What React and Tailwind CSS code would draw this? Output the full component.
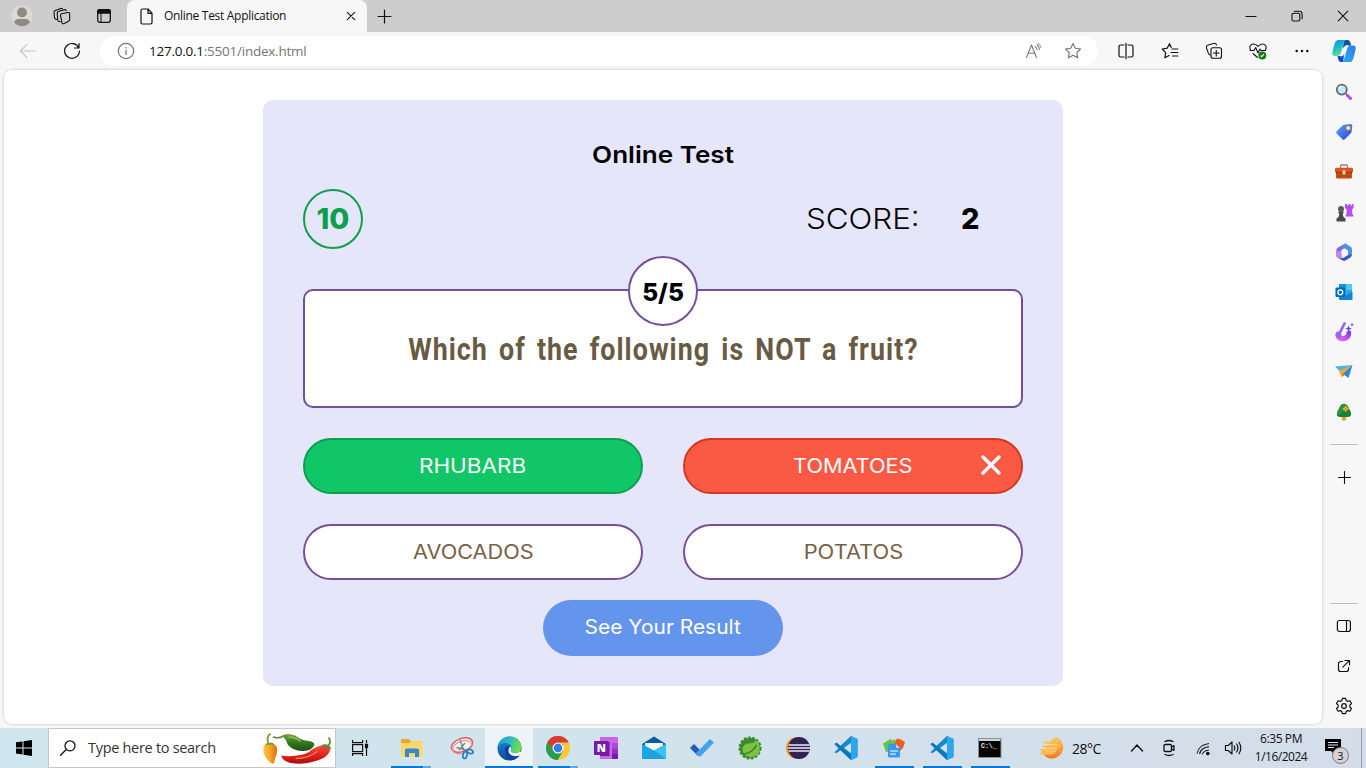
import React from "react";

const Svg = ({ w, h = w, children, vb, ...p }) => (
  <svg width={w} height={h} viewBox={vb || `0 0 ${w} ${h}`} fill="none" stroke="none" className="block shrink-0" {...p}>
    {children}
  </svg>
);

const Line = ({ w = 16, h = w, d, sw = 1.1, c = "#111", children }) => (
  <Svg w={w} h={h} stroke={c} strokeWidth={sw} strokeLinecap="round" strokeLinejoin="round">
    {d && <path d={d} />}
    {children}
  </Svg>
);

const Cell = ({ className = "", children }) => (
  <div className={`flex shrink-0 items-center justify-center ${className}`}>{children}</div>
);

/* ---------- tab strip ---------- */

function TabStrip() {
  return (
    <div className="flex h-8 shrink-0 items-stretch bg-[#cdcdcd] font-['Open_Sans','Noto_Sans',sans-serif]">
      <Cell className="w-11">
        <Svg w={22}>
          <circle cx="11" cy="11" r="10.5" fill="#dcdad7" />
          <circle cx="11" cy="7.5" r="5" fill="#8e8a86" />
          <path d="M3.200 17.500Q3.500 14 7.500 14h7q4 0 4.300 3.500Q15.500 21.300 11 21.300T3.200 17.500z" fill="#8e8a86" />
        </Svg>
      </Cell>
      <Cell className="w-9">
        <Line w={18}>
          <path d="M8.500 6.800l6.500-1.300q1.700-.2 1.700 1.400v5.600q0 1.200-1 1.700l-4.600 2.400q-1.800.7-2.200-1L7.500 8.300q-.1-1.300 1-1.500z" />
          <path d="M7 14.600l-1.400-.4q-.8-.3-.9-1.200L4.200 6.300q0-1.300 1.100-1.700l6-1.900q1.500-.3 1.800 1" />
          <path d="M3.500 12.400l-1-.5q-.9-.4-1-1.300L1 5.200q0-1.400 1.200-1.800l5.500-1.900q1.400-.4 1.800.6" />
        </Line>
      </Cell>
      <Cell className="w-[47px]">
        <Line w={14} sw={1.300}>
          <rect x=".7" y=".7" width="12.600" height="12.600" rx="2" />
          <path d="M.7 4V2.500Q.7.700 2.500.7h9q1.800 0 1.800 1.800V4z" fill="#111" />
          <path d="M4 4.500v8.500" strokeWidth="1" />
        </Line>
      </Cell>
      <div className="flex w-60 items-center rounded-t-lg bg-[#f7f7f7] pl-[13px]">
        <Svg w={13} h={17} stroke="#111" strokeWidth="1.200" strokeLinejoin="round">
          <path d="M1 2.500Q1 1 2.500 1H8l4 4.200v9.300q0 1.500-1.500 1.500h-8Q1 16 1 14.500zM8 1v4.300h4" />
        </Svg>
        <span className="ml-[11px] w-[178px] whitespace-nowrap text-[12px] tracking-[-0.3px] text-[#111]">Online Test Application</span>
        <Line w={18} sw={1.100} d="M5.300 5.300l7.400 7.400M12.700 5.300l-7.400 7.400" />
      </div>
      <Cell className="w-[35px]">
        <Line w={15} d="M7.500 1v13M1 7.500h13" sw={1.200} />
      </Cell>
      <div className="flex-1" />
      <Cell className="w-[46px]"><Line w={12} d="M1 6.500h10" /></Cell>
      <Cell className="w-[46px]">
        <Line w={12}>
          <rect x="1" y="3.200" width="7.800" height="7.800" rx="1.500" />
          <path d="M3.300 1.200h4.900q2.900 0 2.900 2.900v4.700" />
        </Line>
      </Cell>
      <Cell className="w-[46px]"><Line w={12} d="M1.200 1.200l9.600 9.600M10.800 1.200l-9.600 9.600" /></Cell>
    </div>
  );
}

/* ---------- address bar ---------- */

const STAR = "M9 1.500l2.300 4.700 5.200.8-3.700 3.600.9 5.200L9 13.300l-4.700 2.500.9-5.200L1.500 7l5.200-.8z";

function Toolbar() {
  return (
    <div className="flex h-[38px] shrink-0 items-center bg-[#f7f7f7] font-['Open_Sans','Noto_Sans',sans-serif]">
      <Cell className="w-[50px] pl-[6px]">
        <Line w={18} c="#c6c6c6" d="M16.500 9H1.500M8 2.300L1.300 9 8 15.700" sw={1.200} />
      </Cell>
      <Cell className="w-[44px]">
        <Line w={18} d="M15.800 6A7.400 7.400 0 1 0 16.400 9M16 1.500V6h-4.500" sw={1.200} />
      </Cell>
      <div className="ml-[6px] flex h-[30px] w-[998px] items-center rounded-full bg-white pl-[17px]">
        <Svg w={18} stroke="#727272" strokeWidth="1.200">
          <circle cx="9" cy="9" r="7.700" />
          <path d="M9 8v5M9 5v1.500" />
        </Svg>
        <span className="ml-[14px] w-[876px] whitespace-nowrap text-[13.500px] tracking-[-0.24px] text-[#777]">
          <span className="text-[#111]">127.0.0.1</span>:5501/index.html
        </span>
        <Line w={18} h={18} c="#777">
          <path d="M1.500 15.500L6.500 3l5 12.500M3.200 11.300h6.600M10.200 4.500q1.600 1 1.800 3M12 2.500q2.400 1.800 2.400 4.800" />
          <path d="M13.400 1.200q2.400 2 2.700 4.500" strokeWidth=".8" />
        </Line>
        <div className="w-[21px]" />
        <Line w={18} c="#727272" d={STAR} />
      </div>
      <div className="ml-[6px] flex">
        <Cell className="w-11">
          <Line w={18} d="M7 3H3.800Q2 3 2 4.800v8.400Q2 15 3.800 15H7M11 3h3.200Q16 3 16 4.800v8.400q0 1.800-1.800 1.800H11M9 1.300v15.400" sw={1.200} />
        </Cell>
        <Cell className="w-11">
          <Line w={18} d="M10.300 5.500L8.500 1.700 6.200 6.200l-5 .8 3.500 3.600-.8 5.100 4.200-2.200M11 7h5.800M10 10.500h6.800M11.500 14h5.300" sw={1.200} />
        </Cell>
        <Cell className="w-11">
          <Line w={18}>
            <rect x="6" y="5.800" width="10.500" height="10.500" rx="2" />
            <path d="M11.250 8.200v5.700M8.400 11h5.700M5.300 12.900q-1.500-.2-2-1.700L1.400 5.700q-.4-1.800 1.200-2.400l6.600-2q1.700-.3 2.300 1.600" />
          </Line>
        </Cell>
        <Cell className="w-11">
          <Line w={18}>
            <path d="M1.500 8C-.2 4.500 1.800 2 4.500 2 6.800 2 8 3.200 9 4.400 10 3.200 11.200 2 13.500 2c2.700 0 4.700 2.500 3 6M4 11.500l4.500 4M1 8.500h4l1.700-3L9 11l2-4 1 1.500h4.500" />
            <circle cx="13.300" cy="13.500" r="3.900" fill="#127a12" stroke="none" />
            <path d="M12 14l.7.700 2-2.400" stroke="#fff" />
          </Line>
        </Cell>
        <Cell className="w-11">
          <Svg w={16}>
            <circle cx="2.700" cy="8" r="1.250" fill="#111" />
            <circle cx="8" cy="8" r="1.250" fill="#111" />
            <circle cx="13.300" cy="8" r="1.250" fill="#111" />
          </Svg>
        </Cell>
      </div>
      <Cell className="w-10">
        <Svg w={24}>
          <defs>
            <linearGradient id="cpA" x1="0" y1="0" x2="0.300" y2="1">
              <stop offset="0" stopColor="#0a9bdc" /><stop offset=".5" stopColor="#19b7cf" /><stop offset="1" stopColor="#5fe08c" />
            </linearGradient>
            <linearGradient id="cpB" x1="1" y1="0" x2="0" y2="1">
              <stop offset="0" stopColor="#2b7be0" /><stop offset=".5" stopColor="#2f96f0" /><stop offset="1" stopColor="#15b4fa" />
            </linearGradient>
          </defs>
          <path d="M12 1h3.500q2 0 2.700 2l1 3.500h-4.500q-1.500 0-2 1.500L11 9z" fill="#0b5596" />
          <path d="M5.500 17H9q1.500 0 2-1.500l1.500-2L11 23H9q-2 0-2.500-2z" fill="#1840d8" />
          <path d="M6 1h8q-1.500.5-2.200 3L9.300 13q-1 4-4 4H3q-3.200 0-2.600-3.500Q1.400 8 3 3.500 4 1 6 1z" fill="url(#cpA)" />
          <path d="M18 23h-8q1.500-.5 2.200-3l2.500-9q1-4.500 4-4.500H21q3.200 0 2.600 3.500-1 5.500-2.600 10.500-1 2.500-3 2.500z" fill="url(#cpB)" />
          <path d="M15.800 6.500h-1.300q-1.500 0-2 1.500l-1.800 6.500q-.6 2.300-2.300 2.500h1.100q1.700 0 2.200-1.500l1.900-6.500q.6-2.200 2.200-2.500z" fill="#f7f7f7" stroke="#f7f7f7" strokeWidth=".6" />
        </Svg>
      </Cell>
    </div>
  );
}

/* ---------- side bar ---------- */

const sideIcons = [
  <Svg w={18} key="search">
    <path d="M11 11l2 2" stroke="#5d6468" strokeWidth="2" />
    <path d="M12.500 12.500l3 3" stroke="#b646f2" strokeWidth="3" strokeLinecap="round" />
    <circle cx="6.800" cy="6.600" r="5" fill="#c5e8fb" stroke="#63676b" strokeWidth="1.800" />
    <path d="M4 5.500q.8-2 2.800-2.200" stroke="#fff" strokeWidth="1.200" />
  </Svg>,
  <Svg w={18} key="tag">
    <defs><linearGradient id="tg" x1="0" y1="0" x2="1" y2="1"><stop stopColor="#5ba2fa" /><stop offset="1" stopColor="#2e45d3" /></linearGradient></defs>
    <path d="M9 1.800L15.300 1q2-.2 2 1.800l-.8 6.200q-.1.800-.7 1.300l-6 6q-1.200 1.200-2.400 0L1.600 10.500q-1-1.200.2-2.400L7.700 2.400q.5-.5 1.300-.6z" fill="url(#tg)" />
    <circle cx="13.300" cy="5" r="1.700" fill="#fff" stroke="#f7c63c" strokeWidth="1.300" />
  </Svg>,
  <Svg w={18} key="toolbox">
    <path d="M5.500 5V3.300q0-1.300 1.300-1.300h4.400q1.300 0 1.300 1.300V5" stroke="#888" strokeWidth="1.300" />
    <rect y="4.700" width="18" height="5" rx="1.200" fill="#de571a" />
    <path d="M1 9h16v5q0 1.500-1.500 1.500h-13Q1 15.500 1 14z" fill="#c64614" />
    <path d="M1 9.300h16" stroke="#8a2a0b" strokeWidth=".7" />
    <path d="M7.500 7.500h3v3L9 12l-1.500-1.500z" fill="#d8d8da" />
  </Svg>,
  <Svg w={19} key="games">
    <path d="M10 1h2v1.500h1.500V1h2v1.500H17V1h1.500v4L17 6.500l.3 4 1.400 3H10.500l1-3 .2-4L10 5z" fill="#b54cf5" />
    <circle cx="6" cy="6" r="3" fill="#5d5d5d" />
    <path d="M3.500 8.500h5v1.500L7.700 11l.8 3 2 1.500V18.500H1.500V15.500l2-1.500.8-3-.8-1z" fill="#4a4a4a" />
  </Svg>,
  <Svg w={18} key="m365">
    <path d="M9.800.7L3 4.500Q1.300 5.500 1.300 7.500v4.800q0 1.700 1.500 2.500l2 .9 1.700-3.500V7.300L12 4V1.500Q11 0 9.800.7z" fill="#776ce4" />
    <path d="M9 .9q1-.5 2 0L15.300 3.400Q17 4.500 17 6.500V10q0 1.500-1.500 2L13 13V8.800q0-1-.8-1.500L8 4.800z" fill="#4b91e9" />
    <path d="M3.500 15l4.200 2.400q1.400.8 2.800 0l5-2.900q1.500-1 1.500-3.500l-4.200 1.300-4.800 2.600z" fill="#3658b8" />
    <path d="M1.300 8.500v3.700q0 2 1.600 2.600 2 .8 4.700-.7l-1.300-1.500V8z" fill="#c785ec" />
    <path d="M6.500 6.900L9.300 5.300l3.200 1.900v3.500L9.500 12.500l-3-1.800z" fill="#f7f7f7" />
  </Svg>,
  <Svg w={18} key="outlook">
    <rect x="4" y="1" width="13" height="12" rx="1" fill="#28a8ea" />
    <path d="M4 1h7v6H4z" fill="#1593de" /><path d="M11 1h5q1 0 1 1v5h-6z" fill="#52c8f5" />
    <path d="M4 9l7 3.500L17.500 9v7q0 1-1 1H5q-1 0-1-1z" fill="#1384d1" />
    <rect x=".5" y="4.500" width="9.600" height="9.600" rx="1" fill="#0868b8" />
    <circle cx="5.300" cy="9.300" r="2.400" stroke="#fff" strokeWidth="1.400" />
  </Svg>,
  <Svg w={20} key="designer">
    <defs><linearGradient id="ds" x1="1" y1="0" x2="0.200" y2="1"><stop stopColor="#5b3ed2" /><stop offset=".5" stopColor="#b94af5" /><stop offset="1" stopColor="#ed73dd" /></linearGradient></defs>
    <path d="M4 9Q.5 11.500 2 15.500q2 4 7 3.800 6.500-.3 8-6.300.5-2.500-.5-4.500l-4 1q.5 3.500-2.800 4.500-2 .5-3.700-1z" fill="url(#ds)" />
    <path d="M10.500 1.500L5.300 12" stroke="#8d63e8" strokeWidth="2.600" strokeLinecap="round" />
    <circle cx="4.500" cy="13" r="3" fill="#9c62ec" />
    <path d="M14.500 3.500l1 2.300 2.300.9-2.300.9-1 2.300-.9-2.300-2.300-.9 2.300-.9zM18 .8l.6 1.400 1.200.5-1.200.5-.6 1.400-.6-1.400-1.200-.5 1.200-.5z" fill="#6940cf" />
  </Svg>,
  <Svg w={18} key="drop">
    <path d="M0 3.500L17.500 2 5 8.500z" fill="#4bb0fa" />
    <path d="M5 8.800L17.500 2 13.500 15z" fill="#2b86e8" />
    <path d="M17.500 2L4 8l2.500 6 2-3.800z" fill="#f9a724" />
    <path d="M6.500 14l2-3.800 2 1.300z" fill="#cf6c12" />
  </Svg>,
  <Svg w={18} key="tree">
    <path d="M7 12h4v5q-2 1.500-4 0z" fill="#f49a23" />
    <path d="M9 .8q3 0 4.500 3.700l2.300 4.500q1.500 5-3.300 5H5.500Q.7 14 2.200 9L4.500 4.500Q6 .8 9 .8z" fill="#17823e" />
    <path d="M9 .8q2.500 0 4 3.700L4 12q-3 0-1.800-3L4.500 4.500Q6 .8 9 .8z" fill="#2ea44c" opacity=".6" />
    <path d="M10.700 3l1 1.800 1.900 1.100-1.900 1-1 1.900-1-1.900-1.900-1 1.900-1.100z" fill="#ffc525" stroke="#f2af14" strokeWidth=".9" />
    <circle cx="10.700" cy="5.900" r=".8" fill="#d85a12" />
  </Svg>,
];

function Sidebar() {
  return (
    <div className="flex w-11 shrink-0 flex-col items-center pt-[2px]">
      {sideIcons.map((icon, i) => <Cell key={i} className="h-10 w-11">{icon}</Cell>)}
      <div className="mt-[12px] h-px w-7 bg-[#bdbdbd]" />
      <Cell className="mt-[24px] h-4 w-11"><Line w={13} d="M6.500 .5v12M.5 6.500h12" /></Cell>
      <div className="flex-1" />
      <div className="h-px w-7 bg-[#bdbdbd]" />
      <Cell className="mt-[2px] h-10 w-11">
        <Line w={16} h={14} sw={1.200}><rect x="1.400" y="1.500" width="13" height="11" rx="2" /><path d="M10.500 1.500v11" /></Line>
      </Cell>
      <Cell className="h-10 w-11">
        <Line w={14} sw={1.200} d="M5.500 2.500H3.800Q1.500 2.500 1.500 4.800v5.400q0 2.300 2.300 2.300h5.400q2.300 0 2.300-2.300V8.500M8 1.500h4.500V6M12.300 1.700L5.800 8.200" />
      </Cell>
      <Cell className="mb-[2px] h-10 w-11">
        <Line w={18} sw={1.200}>
          <circle cx="9" cy="9" r="2.300" />
          <path d="M7.400 1.300h3.200l.6 2.300 1.400.8 2.300-.7 1.600 2.800-1.700 1.700v1.600l1.700 1.700-1.600 2.800-2.300-.7-1.400.8-.6 2.300H7.400l-.6-2.300-1.400-.8-2.300.7-1.600-2.800 1.700-1.700V8.200L1.500 6.500l1.600-2.800 2.300.7 1.400-.8z" />
        </Line>
      </Cell>
    </div>
  );
}

/* ---------- quiz ---------- */

const answers = [
  { label: "RHUBARB", box: "border-[#0b9f4e] bg-[#11c667] text-white", fit: "scale-x-[1.15]" },
  { label: "TOMATOES", box: "border-[#d63724] bg-[#fa5943] text-white", fit: "scale-x-[1.11]", wrong: true },
  { label: "AVOCADOS", box: "border-[#764f9b] bg-white text-[#766044]", fit: "scale-x-[1.11]" },
  { label: "POTATOS", box: "border-[#764f9b] bg-white text-[#766044]", fit: "scale-x-[1.12]" },
];

function Quiz() {
  return (
    <div className="flex h-[586px] w-[800px] flex-col rounded-[10px] bg-[#e5e6fa] px-10 pt-10 font-['Inter',sans-serif]">
      <h1 className="scale-x-[1.11] text-center text-[23.500px] font-semibold leading-[29px] text-black">Online Test</h1>
      <div className="mt-5 flex h-[60px] items-center">
        <div className="flex size-[60px] items-center justify-center rounded-full border-2 border-[#0b9f4e] text-[29px] font-extrabold text-[#0b9f4e]">10</div>
        <div className="ml-auto flex items-center text-[29px] text-black">
          <span className="w-[155px] origin-left scale-x-[1.08] font-light">SCORE:</span>
          <span className="w-[62px] font-extrabold">2</span>
        </div>
      </div>
      <div className="relative mt-10 flex h-[119px] items-center justify-center rounded-[10px] border-2 border-[#764f9b] bg-white">
        <div className="absolute left-[323px] top-[-35px] flex size-[70px] items-center justify-center rounded-full border-2 border-[#764f9b] bg-white pt-[3px] text-[24.500px] font-extrabold text-black">5/5</div>
        <h2 className="scale-x-[0.864] whitespace-nowrap pt-[3px] font-['Roboto',sans-serif] text-[31px] font-bold tracking-[1.200px] text-[#685a43] [word-spacing:4px]">Which of the following is NOT a fruit?</h2>
      </div>
      <div className="mt-[30px] grid grid-cols-2 gap-x-10 gap-y-[30px]">
        {answers.map((a) => (
          <button key={a.label} className={`relative flex h-14 items-center justify-center rounded-full border-2 pt-[2px] text-[19.500px] ${a.box}`}>
            <span className={a.fit}>{a.label}</span>
            {a.wrong && (
              <span className="absolute right-[20px] top-[15px]">
                <Svg w={20}><path d="M2 2l16 16M18 2L2 18" stroke="#fff" strokeWidth="3.300" strokeLinecap="round" /></Svg>
              </span>
            )}
          </button>
        ))}
      </div>
      <button className="mt-5 flex h-14 w-60 items-center justify-center self-center rounded-full bg-[#6495ed] text-[19.500px] text-white"><span className="scale-x-[1.075]">See Your Result</span></button>
    </div>
  );
}

/* ---------- taskbar ---------- */

const Vscode = () => (
  <Svg w={24}>
    <path d="M17 0L23.500 3v18L17 24 6.500 14.200 2.500 17.200.5 16.200 4.700 12 .5 7.800l2-1L6.500 9.800z" fill="#1687cc" />
    <path d="M17 0L23.500 3v18L17 24z" fill="#29a8ee" />
    <path d="M2.500 6.800L17 18v6L.5 8.200z" fill="#0b77bb" />
    <path d="M17 6.700v10.600L10 12z" fill="#d2e1eb" />
  </Svg>
);

const apps = [
  { bar: "double", nudge: true, icon: (
    <Svg w={22} h={20}>
      <path d="M0 1h8l1.500 2H21v16H0z" fill="#e9aa27" /><path d="M0 5h9l1.500-2H21.500v16H0z" fill="#ffd768" />
      <path d="M4 12q0-1.500 1.500-1.500h11q1.500 0 1.500 1.500v7h-4v-4H8v4H4z" fill="#3289cd" />
    </Svg>) },
  { icon: (
    <Svg w={24}>
      <ellipse cx="12" cy="9" rx="11" ry="6.500" transform="rotate(-20 12 9)" fill="#edf0f1" stroke="#e35b5b" strokeWidth="1.500" />
      <ellipse cx="11.500" cy="11" rx="10" ry="6" transform="rotate(-20 12 9)" stroke="#e88888" />
      <path d="M10 4l4.500 12M6.500 11.500l11 3M15 7l-6 7" stroke="#7a8288" strokeWidth="1.300" />
      <ellipse cx="15" cy="19" rx="2" ry="3.500" transform="rotate(15 15 19)" stroke="#2487bf" strokeWidth="1.800" />
      <ellipse cx="20" cy="15.500" rx="3.200" ry="1.900" transform="rotate(20 20 15.500)" stroke="#2487bf" strokeWidth="1.800" />
    </Svg>) },
  { active: true, bar: "full", icon: (
    <Svg w={25}>
      <defs>
        <linearGradient id="eg" x1="0" y1="0" x2="1" y2=".4"><stop stopColor="#1795d2" /><stop offset=".5" stopColor="#27bdc4" /><stop offset="1" stopColor="#6edc4b" /></linearGradient>
        <linearGradient id="eb" x1="0" y1="0" x2="0" y2="1"><stop stopColor="#2385d9" /><stop offset="1" stopColor="#0b4da0" /></linearGradient>
      </defs>
      <circle cx="12.500" cy="12.500" r="12" fill="url(#eb)" />
      <path d="M.6 11.500C1.500 4.500 7 .5 13 .5c6.500 0 11.500 4.800 11.500 10.500 0 4-3 6.300-6.500 6.300-2.500 0-4.300-1-4.300-2.200 0-.8 1-1.300 1-3C14.700 9 11.500 7 8 7 4.500 7 1.800 9 .6 11.500z" fill="url(#eg)" />
      <path d="M13.700 15.100c0 1.200 1.800 2.200 4.300 2.200 2.200 0 3.800-.7 5-2l1.700 1.400-2.200 3q-4 1.300-7.300-.2-4-2-3.900-5.500.1-2 1.500-3.500 1.600.5 1.600 2c0 1-.7 1.700-.7 2.600z" fill="#edf4f8" />
      <path d="M8 12q-1 9 6.500 12.300 5-.8 8-5-8 3.500-11.200-2-.8-3 1.500-7.200Q9.300 9.300 8 12z" fill="#123f91" />
    </Svg>) },
  { bar: "double", icon: (
    <Svg w={24}>
      <path d="M12 12L1.600 6A12 12 0 0 1 22.400 6z" fill="#d93c2f" />
      <path d="M1.600 6A12 12 0 0 0 12 24l5.200-9L12 12z" fill="#279e4e" />
      <path d="M22.400 6A12 12 0 0 1 12 24l5.200-9L17.200 9l-4-3z" fill="#fcc835" />
      <path d="M1.600 6L6.800 15l5.200-3-.5-6z" fill="#279e4e" /><path d="M12 6.600h10.700A12 12 0 0 0 1.600 6l5.200 7z" fill="#d93c2f" />
      <circle cx="12" cy="12" r="5.500" fill="#fff" /><circle cx="12" cy="12" r="4.400" fill="#357ee9" />
    </Svg>) },
  { icon: (
    <Svg w={24}>
      <path d="M6 1h17q1 0 1 1v20q0 1-1 1H6z" fill="#ca64ea" />
      <path d="M18 7h6v5.500h-6z" fill="#ae4bd5" /><path d="M18 12.500h6V18h-6z" fill="#9332bf" /><path d="M18 18h6v4q0 1-1 1h-5z" fill="#7719aa" />
      <path d="M9 6h6.500v14H6v-2z" fill="#60258b" />
      <rect y="5" width="14.500" height="14" rx="1" fill="#7719aa" />
      <text x="7.300" y="16" textAnchor="middle" fontFamily="Open Sans" fontWeight="800" fontSize="11" fill="#fff">N</text>
    </Svg>) },
  { icon: (
    <Svg w={24}>
      <path d="M0 8L12 .5 24 8v6H0z" fill="#075ba3" />
      <path d="M3 7h18v7l-9 3-9-3z" fill="#f7f7f7" />
      <path d="M0 8l12 6.500L24 8v15H0z" fill="#19a7e9" />
      <path d="M0 23L17 11.800 24 8v15z" fill="#38c3f1" /><path d="M0 23l12-8.500L24 23z" fill="#118ad2" opacity=".6" />
    </Svg>) },
  { icon: (
    <Svg w={24} h={20}>
      <path d="M0 10l4-4 8 8-4 4z" fill="#205db9" /><path d="M6 15L20 1l4 3.500L10 19z" fill="#43a3ee" />
    </Svg>) },
  { icon: (
    <Svg w={24}>
      <circle cx="12" cy="12" r="10.300" fill="#3e8b2f" stroke="#3e8b2f" strokeWidth="2.500" strokeDasharray="2.700 1.500" />
      <path d="M19 4q4.500 7 1.500 14-5 5-12 2-4-2.500-4-7 .5-4.500 5-5.500Q16 7.500 19 4z" fill="#7bc142" />
      <path d="M5.500 18q9-1 13-9" stroke="#377f2c" strokeWidth="1.500" />
    </Svg>) },
  { icon: (
    <Svg w={24} h={22}>
      <circle cx="11" cy="11" r="11" fill="#ee981e" /><circle cx="13" cy="11" r="11" fill="#302254" />
      <path d="M2.500 8h21M2 11h22M2.500 14h21" stroke="#eceaf2" strokeWidth="1.700" />
    </Svg>) },
  { icon: <Vscode /> },
  { bar: "wide", icon: (
    <Svg w={22}>
      <path d="M0 6.500L7.500 2l2 1.500L12 2l1 7-4 5-6 1z" fill="#62c449" /><path d="M12 5l2-3.500L18 2.500 22 5l-2 6-5 5-4-6z" fill="#f15a21" />
      <path d="M6 7h7l4 4v8q0 1.500-1.500 1.500h-9Q5 20.500 5 19V8z" fill="#3897f0" />
      <path d="M13 7l4 4h-4z" fill="#a9d6ff" /><path d="M7 14h8M7 17h6" stroke="#fff" strokeWidth="1.200" />
    </Svg>) },
  { bar: "wide", icon: <Vscode /> },
  { bar: "wide", icon: (
    <Svg w={24} h={20}>
      <rect x=".5" y=".5" width="22.500" height="19" fill="#050505" stroke="#8a8f95" />
      <path d="M1 1h21.500v2H1z" fill="#cfd4d8" />
      <text x="3" y="10" fontFamily="Liberation Mono" fontWeight="700" fontSize="6.500" fill="#eee">C:\_</text>
    </Svg>) },
];

const Bar = ({ kind, nudge }) => {
  if (!kind) return null;
  return (
    <div className={`absolute inset-x-0 bottom-0 flex h-[2px] justify-center ${kind === "full" ? "" : nudge ? "pr-[4px]" : "pl-[2px]"}`}>
      {kind === "full" && <div className="w-full bg-[#0a78d4]" />}
      {kind === "wide" && <div className="w-[39px] bg-[#0a78d4]" />}
      {kind === "double" && <><div className="w-8 bg-[#0a78d4]" /><div className="w-2 bg-[#64a9e3]" /></>}
    </div>
  );
};

function Taskbar() {
  return (
    <div className="flex h-10 shrink-0 items-stretch bg-linear-to-r from-[#cfe6ee] via-[#d2e3ec] via-50% to-[#d4dcea] font-['Open_Sans','Noto_Sans',sans-serif] text-[#111]">
      <Cell className="w-12">
        <Svg w={16}><path d="M0 2.300l6.500-.9v6H0zM7.500 1.200L16 0v7.400H7.500zM0 8.500h6.500v6L0 13.600zM7.500 8.500H16V16l-8.500-1.200z" fill="#000" /></Svg>
      </Cell>
      <div className="flex w-72 items-center border border-[#c3c7c9] bg-white pl-[10px]">
        <Line w={18} sw={1.300}><circle cx="11" cy="6.800" r="5" /><path d="M7.300 10.500L1.500 16.300" /></Line>
        <span className="ml-[11px] w-[173px] whitespace-nowrap text-[14.500px] tracking-[-0.3px] text-[#333]">Type here to search</span>
        <Svg w={70} h={34}>
          <defs>
            <linearGradient id="pg" x1="0" y1="0" x2="0" y2="1"><stop stopColor="#6fa83d" /><stop offset=".5" stopColor="#35791f" /><stop offset="1" stopColor="#1e4f12" /></linearGradient>
            <linearGradient id="pr" x1="0" y1="0" x2="0" y2="1"><stop stopColor="#f04c3c" /><stop offset=".6" stopColor="#df1e18" /><stop offset="1" stopColor="#a60d0a" /></linearGradient>
            <linearGradient id="po" x1="0" y1="0" x2="1" y2="0"><stop stopColor="#ffc24a" /><stop offset=".5" stopColor="#f9a325" /><stop offset="1" stopColor="#df6d12" /></linearGradient>
          </defs>
          <path d="M7.500 13Q5 6 9 3" stroke="#74963c" strokeWidth="1.700" strokeLinecap="round" />
          <path d="M3 15q2-3 6-2.500 6 0 7 4.500.5 5-1.500 9l-1.500 6q-1 1.500-3 0Q0 24 3 15z" fill="url(#po)" />
          <path d="M3.500 15q2-4 4.500-3 3-1.500 6 2-4-1-6 0-2-1-4.500 1z" fill="#7d9d32" />
          <path d="M12.500 6q5 2 10-1" stroke="#5d8834" strokeWidth="1.600" strokeLinecap="round" />
          <path d="M21 4.500q5-3 13 0 7 5 14 5.500 5 .5 5.500 3.500-2 6-11 6.500-10 0-15.500-6-2-6-6-9.500z" fill="url(#pg)" />
          <path d="M28 6q6 0 11 4" stroke="#a4cc7f" strokeWidth="1.100" strokeLinecap="round" />
          <path d="M65 16q6-3 3-9" stroke="#6b9b3c" strokeWidth="1.900" strokeLinecap="round" />
          <path d="M20 24.500q7 1.500 16 0 10-1 15-6 6-4 12-4 6 1 6 5-2 6-10 9-12 5-25 4-12-1-14-8z" fill="url(#pr)" />
          <path d="M60 14.500q3-2 6-1 4 1 4 5-4-2-10-4z" fill="#588f30" />
          <path d="M35 27.500q13 0 21-7" stroke="#ff9d8d" strokeWidth="1" strokeLinecap="round" />
        </Svg>
      </div>
      <Cell className="w-[48px]">
        <Svg w={18} stroke="#111" strokeWidth="1.200">
          <rect x="1.600" y="5.600" width="10" height="7" /><path d="M1.600 1v2.600h10V1M1.600 17v-2.400h10V17M15.500 1v3.500M15.500 9v8" /><rect x="14.500" y="5.500" width="2" height="3" fill="#111" />
        </Svg>
      </Cell>
      <div className="flex pl-[5px]">
        {apps.map((a, i) => (
          <div key={i} className={`relative flex w-12 items-center justify-center ${a.nudge ? "pr-[3px]" : "pl-[1px]"} ${a.active ? "bg-[#ecf4f8]" : ""}`}>
            {a.icon}
            <Bar kind={a.bar} nudge={a.nudge} />
          </div>
        ))}
      </div>
      <div className="ml-auto flex items-center">
        <Svg w={24}>
          <defs><linearGradient id="wm" x1="0" y1="0" x2="0" y2="1"><stop stopColor="#ffc95a" /><stop offset="1" stopColor="#f07c1c" /></linearGradient></defs>
          <path d="M14 2l3-1q5 3 6 8 1 7-4 11-5 4-11 2-4-2-6-6z" fill="url(#wm)" />
          <path d="M5 6.500h12M3 10.500h16M1 14h15M1 17.500h12" stroke="#fbbf4e" strokeWidth="2" strokeLinecap="round" />
          <path d="M6 8.500h12M3 12.300h14M4 15.800h12" stroke="#f8dfb5" strokeWidth=".9" />
        </Svg>
        <span className="ml-[8px] w-[53px] whitespace-nowrap text-[14px] tracking-[-0.5px]">28°C</span>
        <Cell className="w-6"><Line w={14} h={10} sw={1.400} d="M1.500 8L7 2l5.500 6" /></Cell>
        <Cell className="w-10">
          <Line w={16} h={18} sw={1.300}>
            <rect x="3" y="5.500" width="7.500" height="7" rx="1.300" /><path d="M10.500 8l2.500-1.300v4.600L10.500 10M4 2.500Q8 .5 12 2.500M4 15.500q4 2 8 0" />
          </Line>
        </Cell>
        <Cell className="w-[28px]">
          <Svg w={15} stroke="#222" strokeWidth="1.200">
            <path d="M1 12.500Q2.500 4 13 2.500M3.500 13Q5 6.800 13 5.700M6.300 13.300Q7.500 9.800 13 9" />
            <circle cx="11.800" cy="12.600" r="1.800" fill="#111" stroke="none" />
          </Svg>
        </Cell>
        <Cell className="w-[32px]">
          <Line w={18} sw={1.200} d="M1.500 6.500h2.800L8 3v12L4.300 11.500H1.500zM10.200 7q1.300 2 0 4M12.600 5q2.700 4 0 8M15 3.300q3.600 5.700 0 11.400" />
        </Cell>
        <div className="ml-[-1px] flex w-[66px] flex-col items-center text-[12px] leading-[18px]">
          <span className="whitespace-nowrap tracking-[-0.4px]">6:35 PM</span>
          <span className="whitespace-nowrap tracking-[-0.5px]">1/16/2024</span>
        </div>
        <div className="relative ml-[11px] mr-[11px] h-[24px] w-[25px] pt-[3px]">
          <Svg w={17} h={17}><path d="M0 0h16v12h-6v4l-4-4H0z" fill="#000" /><path d="M3 3.500h10M3 6h10M3 8.500h6" stroke="#dce2ea" strokeWidth="1.100" /></Svg>
          <div className="absolute left-[7px] top-[11px] flex size-[17px] items-center justify-center rounded-full border border-[#777] bg-[#d3d3d5] text-[11px] leading-none">3</div>
        </div>
        <div className="mr-[4px] h-10 w-px bg-[#98a2ad]" />
      </div>
    </div>
  );
}

export default function App() {
  return (
    <div className="flex h-[768px] w-[1366px] flex-col overflow-hidden bg-[#f7f7f7]">
      <TabStrip />
      <Toolbar />
      <div className="flex min-h-0 flex-1">
        <div className="mb-[4px] ml-[4px] flex w-[1318px] shrink-0 justify-center rounded-[8px] bg-white pt-[30px] shadow-[0_0_2px_1px_#dadada]">
          <Quiz />
        </div>
        <Sidebar />
      </div>
      <Taskbar />
    </div>
  );
}
